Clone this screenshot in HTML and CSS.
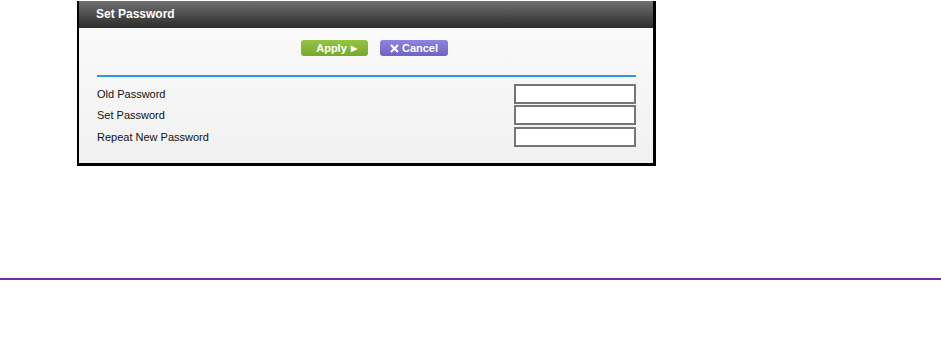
FILE: index.html
```html
<!DOCTYPE html>
<html>
<head>
<meta charset="utf-8">
<link rel="stylesheet" href="styles.css">
</head>
<body>
<div class="page">
  <div class="panel">
    <div class="panel-head">Set Password</div>
    <div class="panel-body">
      <div class="buttons">
        <button class="btn btn-apply">Apply <span class="tri">&#9654;</span></button>
        <button class="btn btn-cancel"><svg class="x" width="9" height="9" viewBox="0 0 9 9"><path d="M1 1L8 8M8 1L1 8" stroke="#fff" stroke-width="2.2"/></svg>Cancel</button>
      </div>
      <div class="rule"></div>
      <div class="form">
        <div class="row r1"><span class="label">Old Password</span><input class="field" type="password"></div>
        <div class="row r2"><span class="label">Set Password</span><input class="field" type="password"></div>
        <div class="row r3"><span class="label">Repeat New Password</span><input class="field" type="password"></div>
      </div>
    </div>
  </div>
  <div class="divider"></div>
</div>
</body>
</html>
```
FILE: styles.css
```css
html, body { margin: 0; padding: 0; background: #fff; }
body { font-family: "Liberation Sans", Arial, sans-serif; width: 941px; height: 346px; overflow: hidden; }
.page { padding-top: 1px; }
.panel {
  margin-left: 77px;
  width: 574px;
  border-left: 2px solid #000;
  border-right: 3px solid #000;
  border-bottom: 3px solid #000;
  background: linear-gradient(#fbfbfb, #f1f1f1);
}
.panel-head {
  height: 27px;
  line-height: 27px;
  padding-left: 17px;
  color: #fff;
  font-weight: bold;
  font-size: 12px;
  background: linear-gradient(#707070, #2c2c2c);
}
.panel-body { padding: 12px 17px 16px 18px; }
.buttons { display: flex; gap: 12px; padding-left: 204px; height: 16px; }
.btn {
  height: 16px; border: 0; border-radius: 3px; padding: 0; margin: 0;
  color: #fff; font-family: "Liberation Sans", Arial, sans-serif; font-weight: bold; font-size: 11px;
  display: flex; align-items: center; justify-content: center;
}
.btn-apply { width: 67px; background: linear-gradient(#95c342, #78a92d); padding-left: 4px; }
.tri { font-size: 8px; margin-left: 4px; }
.btn-cancel { width: 68px; background: linear-gradient(#8f84e0, #6f62c6); }
.x { margin-right: 3px; }
.rule { height: 2px; background: #2b9ad6; margin-top: 19px; }
.form { margin-top: 7px; display: flex; flex-direction: column; }
.row { display: flex; justify-content: space-between; align-items: center; font-size: 11px; color: #111; }
.r2 { margin-top: 1px; }
.r3 { margin-top: 2px; }
.field {
  width: 122px; height: 20px; box-sizing: border-box;
  border: 2px solid #757575; background: #fff; margin: 0; padding: 0;
}
.divider { margin-top: 112px; height: 2px; background: #7030a0; }
```
